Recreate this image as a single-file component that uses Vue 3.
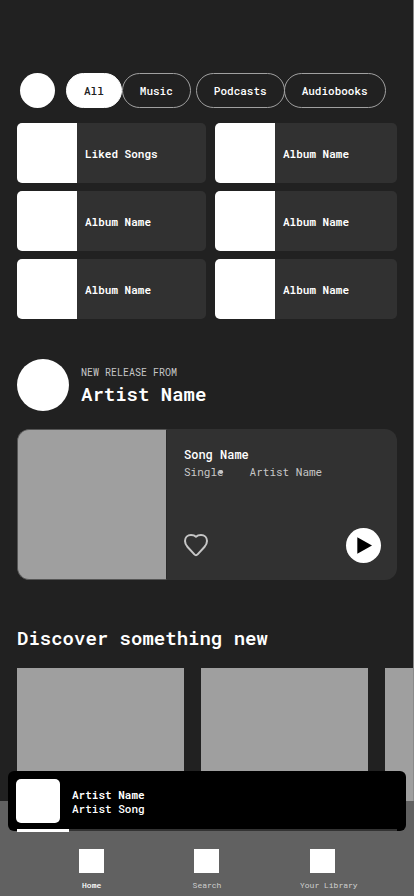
<script setup>
import { ref } from 'vue'

const filters = ['All', 'Music', 'Podcasts', 'Audiobooks']
const active = ref('All')
const tiles = ['Liked Songs', 'Album Name', 'Album Name', 'Album Name', 'Album Name', 'Album Name']
const tabs = ['Home', 'Search', 'Your Library']
const progress = 13.7
</script>

<template>
  <div class="app">
    <main class="content">
      <div class="filters">
        <button class="avatar" aria-label="Profile"></button>
        <div class="group">
          <button
            v-for="f in filters.slice(0, 2)"
            :key="f"
            class="chip"
            :class="{ on: f === active }"
            @click="active = f"
          >{{ f }}</button>
        </div>
        <div class="group tight">
          <button
            v-for="f in filters.slice(2)"
            :key="f"
            class="chip"
            :class="{ on: f === active }"
            @click="active = f"
          >{{ f }}</button>
        </div>
      </div>

      <section class="tiles">
        <a v-for="(t, i) in tiles" :key="i" class="tile" href="#">
          <span class="cover"></span>
          <span class="label">{{ t }}</span>
        </a>
      </section>

      <section class="artist">
        <div class="portrait"></div>
        <div class="heading">
          <p class="eyebrow">NEW RELEASE FROM</p>
          <h2>Artist Name</h2>
        </div>
      </section>

      <article class="release">
        <div class="art"></div>
        <div class="info">
          <div>
            <h3>Song Name</h3>
            <p class="meta"><span class="kind">Single</span><span>Artist Name</span></p>
          </div>
          <div class="actions">
            <button class="like" aria-label="Like">
              <svg width="26" height="26" viewBox="1 0.5 26 26" fill="none" stroke="#c6c6c6" stroke-width="2" stroke-linejoin="round">
                <path d="M13 4.2C11.6 2.9 10 2.5 8 2.5C4.5 2.5 2 5 2 8.6C2 11.2 2.9 12.7 4.6 14.5L11.4 21.9C12.4 23 13.6 23 14.6 21.9L21.4 14.5C23.1 12.7 24 11.2 24 8.6C24 5 21.5 2.5 18 2.5C16 2.5 14.4 2.9 13 4.2Z" />
              </svg>
            </button>
            <button class="play" aria-label="Play">
              <svg width="35" height="35" viewBox="0 0 35 35"><path d="M11.3 9.3L26 17.5L11.3 25.7Z" fill="#000" /></svg>
            </button>
          </div>
        </div>
      </article>

      <section class="discover">
        <h2>Discover something new</h2>
        <div class="shelf">
          <div v-for="n in 3" :key="n" class="pick"></div>
        </div>
      </section>
    </main>

    <div class="player">
      <div class="thumb"></div>
      <div class="now">
        <strong>Artist Name</strong>
        <span>Artist Song</span>
      </div>
      <div class="track"><div class="bar" :style="{ width: progress + '%' }"></div></div>
    </div>

    <nav class="tabs">
      <a v-for="(t, i) in tabs" :key="t" href="#" class="tab" :class="{ current: i === 0, library: i === 2 }">
        <span class="icon"></span>
        <span class="name">{{ t }}</span>
      </a>
    </nav>
  </div>
</template>

<style>
body {
  margin: 0;
  background: #212121;
}
</style>

<style scoped>
.app {
  position: relative;
  display: flex;
  flex-direction: column;
  height: 100vh;
  color: #fff;
  background: #212121;
  font-family: "Roboto Mono", "DejaVu Sans Mono", monospace;
  font-size: 11px;
}
.app * {
  box-sizing: border-box;
}
h2, h3, p {
  margin: 0;
}
a {
  color: inherit;
  text-decoration: none;
}
button {
  padding: 0;
  border: 0;
  background: none;
  color: inherit;
  font: inherit;
  cursor: pointer;
}
.content {
  flex: 1;
  min-height: 0;
  padding: 73px 16px 0 17px;
  border-right: 1px solid #8a8a8a;
  overflow: hidden auto;
  scrollbar-width: none;
}
.filters {
  display: flex;
  padding-left: 3px;
}
.avatar {
  flex: none;
  width: 35px;
  height: 35px;
  margin-right: 11px;
  border-radius: 50%;
  background: #fff;
}
.group {
  display: flex;
}
.tight {
  margin-left: 5px;
}
.tight .chip + .chip {
  margin-left: -1px;
}
.chip {
  height: 35px;
  padding: 0 17px;
  border: 1px solid #a0a0a0;
  border-radius: 18px;
  font-weight: 500;
  white-space: nowrap;
}
.chip.on {
  border-color: #fff;
  background: #fff;
  color: #212121;
}
.tiles {
  display: grid;
  grid-template-columns: 189fr 182fr;
  gap: 8px 9px;
  margin-top: 15px;
}
.tile {
  display: flex;
  align-items: center;
  gap: 8px;
  height: 60px;
  border-radius: 5px;
  background: #313131;
  overflow: hidden;
}
.cover {
  flex: none;
  width: 60px;
  height: 60px;
  background: #fff;
}
.label {
  font-weight: 600;
}
.artist {
  display: flex;
  align-items: center;
  gap: 12px;
  margin-top: 40px;
}
.portrait {
  width: 52px;
  height: 52px;
  border-radius: 50%;
  background: #fff;
}
.heading {
  padding-top: 5px;
}
.eyebrow {
  color: #c6c6c6;
  font-size: 10px;
  line-height: 12px;
}
h2 {
  font-size: 19px;
  font-weight: 600;
  line-height: 32px;
}
.heading h2 {
  line-height: 30px;
}
.release {
  display: flex;
  height: 151px;
  margin-top: 18px;
  border-radius: 12px;
  background: #313131;
  overflow: hidden;
}
.art {
  flex: none;
  width: 150px;
  border: 1px solid #555;
  border-right-color: #2a2a2a;
  border-radius: 12px 0 0 12px;
  background: #9f9f9f;
}
.info {
  flex: 1;
  display: flex;
  flex-direction: column;
  justify-content: space-between;
  padding: 16px 16px 17px 17px;
}
h3 {
  font-size: 12px;
  font-weight: 500;
  line-height: 18px;
}
.meta {
  display: flex;
  gap: 26px;
  color: #c6c6c6;
  line-height: 17px;
}
.kind {
  position: relative;
}
.kind::after {
  content: "";
  position: absolute;
  right: 1px;
  top: 7px;
  width: 4px;
  height: 4px;
  border-radius: 50%;
  background: #c6c6c6;
}
.actions {
  display: flex;
  align-items: center;
  justify-content: space-between;
}
.like svg, .play svg {
  display: block;
}
.play {
  border-radius: 50%;
  background: #fff;
}
.discover {
  margin-top: 42px;
}
.shelf {
  display: flex;
  gap: 17px;
  margin: 14px -16px 0 0;
  overflow: hidden;
}
.pick {
  flex: none;
  width: 167px;
  height: 167px;
  background: #9f9f9f;
}
.player {
  position: absolute;
  right: 8px;
  bottom: 65px;
  left: 8px;
  display: flex;
  align-items: center;
  gap: 12px;
  height: 60px;
  padding: 0 8px;
  border-radius: 6px;
  background: #000;
}
.thumb {
  width: 44px;
  height: 44px;
  border-radius: 5px;
  background: #fff;
}
.now {
  display: flex;
  flex-direction: column;
  padding-top: 2px;
  line-height: 14px;
}
.now strong {
  font-weight: 600;
}
.now span {
  font-weight: 500;
}
.track {
  position: absolute;
  right: 9px;
  bottom: 0;
  left: 9px;
  height: 2px;
  background: #333;
}
.bar {
  height: 3px;
  background: #fff;
}
.tabs {
  flex: none;
  display: grid;
  grid-template-columns: repeat(3, 1fr);
  height: 95px;
  padding: 48px 34px 0;
  background: #616161;
}
.tab {
  display: flex;
  flex-direction: column;
  align-items: center;
  gap: 6px;
  color: #d0d0d0;
  font-size: 8px;
  line-height: 12px;
}
.icon {
  width: 25px;
  height: 24px;
  background: #fff;
}
.current {
  color: #fff;
  font-weight: 500;
}
.library .name {
  padding-left: 13px;
}
</style>
